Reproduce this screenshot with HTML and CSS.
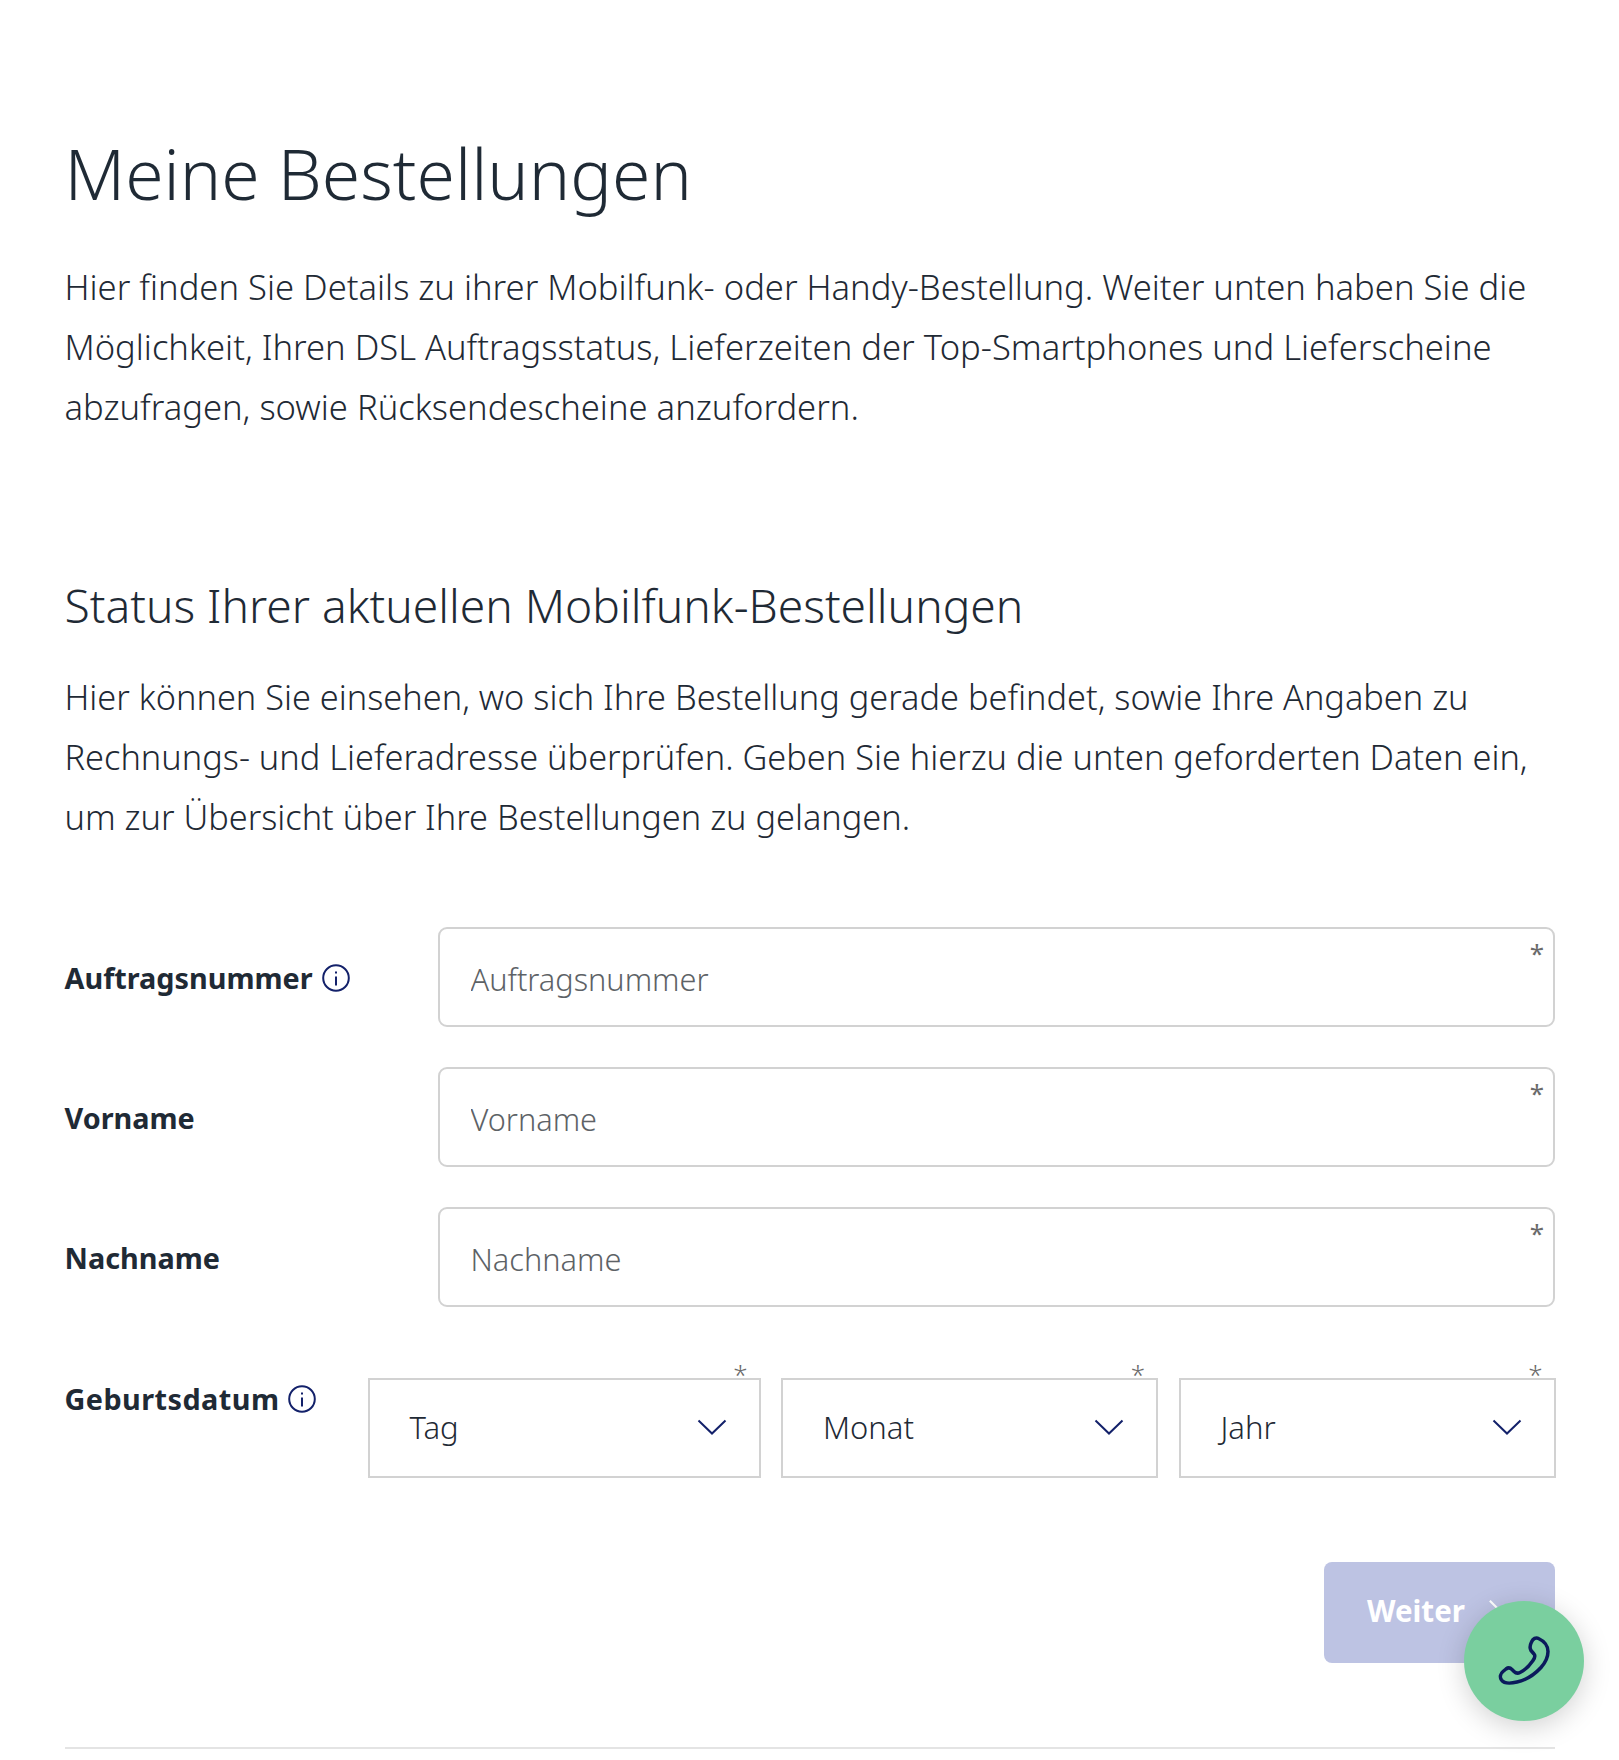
FILE: index.html
```html
<!DOCTYPE html>
<html lang="de">
<head>
  <meta charset="UTF-8" />
  <meta name="viewport" content="width=device-width, initial-scale=1.0"/>
  <title>Meine Bestellungen</title>
  <link rel="stylesheet" href="styles.css">
</head>
<body>
  <main class="container">
    <h1>Meine Bestellungen</h1>
    <p class="intro">Hier finden Sie Details zu ihrer Mobilfunk- oder Handy-Bestellung. Weiter unten haben Sie die<br>Möglichkeit, Ihren DSL Auftragsstatus, Lieferzeiten der Top-Smartphones und Lieferscheine<br>abzufragen, sowie Rücksendescheine anzufordern.</p>

    <h2>Status Ihrer aktuellen Mobilfunk-Bestellungen</h2>
    <p class="intro intro-status">Hier können Sie einsehen, wo sich Ihre Bestellung gerade befindet, sowie Ihre Angaben zu<br>Rechnungs- und Lieferadresse überprüfen. Geben Sie hierzu die unten geforderten Daten ein,<br>um zur Übersicht über Ihre Bestellungen zu gelangen.</p>

    <form class="order-form">
      <div class="form-row">
        <label for="orderNumber">Auftragsnummer
          <svg class="info-icon" viewBox="0 0 28 28"><circle cx="14" cy="14" r="12.8"/><path d="M14 12.5v9M14 7.5v2"/></svg>
        </label>
        <div class="field">
          <input type="text" id="orderNumber" placeholder="Auftragsnummer"/>
          <span class="required">*</span>
        </div>
      </div>
      <div class="form-row">
        <label for="firstName">Vorname</label>
        <div class="field">
          <input type="text" id="firstName" placeholder="Vorname"/>
          <span class="required">*</span>
        </div>
      </div>
      <div class="form-row">
        <label for="lastName">Nachname</label>
        <div class="field">
          <input type="text" id="lastName" placeholder="Nachname"/>
          <span class="required">*</span>
        </div>
      </div>
      <div class="date-row">
        <label>Geburtsdatum
          <svg class="info-icon" viewBox="0 0 28 28"><circle cx="14" cy="14" r="12.8"/><path d="M14 12.5v9M14 7.5v2"/></svg>
        </label>
        <div class="date-selects">
          <div class="select-box">Tag
            <svg class="chevron" viewBox="0 0 30 16"><path d="M1.5 1.5L15 14.5L28.5 1.5"/></svg>
            <span class="required outside">*</span>
          </div>
          <div class="select-box">Monat
            <svg class="chevron" viewBox="0 0 30 16"><path d="M1.5 1.5L15 14.5L28.5 1.5"/></svg>
            <span class="required outside">*</span>
          </div>
          <div class="select-box">Jahr
            <svg class="chevron" viewBox="0 0 30 16"><path d="M1.5 1.5L15 14.5L28.5 1.5"/></svg>
            <span class="required outside">*</span>
          </div>
        </div>
      </div>
      <div class="form-actions">
        <button type="button" class="next-btn">Weiter
          <svg class="next-arrow" viewBox="0 0 16 28"><path d="M2 2L14 14L2 26"/></svg>
        </button>
      </div>
    </form>
    <hr class="divider">
  </main>

  <button class="call-btn" aria-label="Anrufen">
    <svg viewBox="0 0 52 52"><path d="M33.500 7C35 3.500 38 2 40.500 3.500C46 6 50 11 50 16.500C50 22 47 28 43 32.500C37 39 28 45 19 47C13 48.500 6 48.500 3.500 45C1.500 42 2.500 38.500 5 36.500L8 34C10 32.500 12.500 33 14 34.500L16 36.500C18 38.500 20 38.500 22 37.500C27 35 32 30 35 25.500C37 22.500 37.500 20.500 36 19L33 15.500C31.500 13 32 10 33.500 7z"/></svg>
  </button>
</body>
</html>
```
FILE: styles.css
```css
body {
  font-family: 'Noto Sans', sans-serif;
  margin: 0;
  padding: 0;
  background: #fff;
  color: #1f2a35;
  height: 1760px;
  overflow: hidden;
  position: relative;
}

.container {
  padding: 0 64px 0 64.5px;
}

h1 {
  font-size: 69.6px;
  font-weight: 300;
  line-height: 86px;
  margin: 0;
  padding-top: 130px;
}

h2 {
  font-size: 46.2px;
  font-weight: 300;
  line-height: 60px;
  margin: 0;
  padding-top: 139px;
}

.intro {
  font-size: 34.6px;
  font-weight: 300;
  line-height: 60px;
  margin: 41px 0 0;
}

.intro.intro-status {
  font-size: 34.35px;
  margin-top: 31px;
}

.order-form {
  margin-top: 80px;
}

.form-row {
  display: flex;
  align-items: center;
  margin-bottom: 40px;
}

.form-row label {
  width: 373px;
  flex-shrink: 0;
}

label {
  display: flex;
  align-items: center;
  gap: 9px;
  font-size: 28.8px;
  font-weight: 700;
  height: 100px;
}

.info-icon {
  width: 28px;
  height: 28px;
  margin-top: 2px;
  fill: none;
  stroke: #13216a;
  stroke-width: 2;
}

.field {
  flex: 1;
  position: relative;
}

.field input {
  display: block;
  width: 100%;
  box-sizing: border-box;
  height: 100px;
  border: 2px solid #d2d2d2;
  border-radius: 9px;
  padding: 4px 31px 0;
  font-family: 'Noto Sans', sans-serif;
  font-size: 30.7px;
  font-weight: 300;
  outline: none;
  background: #fff;
}

.field input::placeholder {
  color: #5d6266;
  opacity: 1;
}

.required {
  position: absolute;
  top: 11px;
  right: 11px;
  font-size: 26px;
  line-height: 30px;
  color: #6a6a6a;
}

.required.outside {
  top: -21px;
  right: 11px;
}

.date-row {
  display: flex;
  margin-top: 71px;
}

.date-row label {
  width: 303px;
  flex-shrink: 0;
  height: 40px;
  letter-spacing: 0.45px;
}

.date-selects {
  flex: 1;
  display: grid;
  grid-template-columns: 393px 377px 377px;
  column-gap: 20.5px;
}

.select-box {
  position: relative;
  box-sizing: border-box;
  height: 100px;
  border: 2px solid #d2d2d2;
  padding: 0 32px 2px 40px;
  display: flex;
  align-items: center;
  justify-content: space-between;
  font-size: 31px;
  font-weight: 300;
}

.chevron {
  width: 30px;
  height: 16px;
  fill: none;
  stroke: #13216a;
  stroke-width: 2;
}

.form-actions {
  display: flex;
  justify-content: flex-end;
  margin-top: 84px;
}

.next-btn {
  width: 231px;
  height: 101px;
  background: #bdc3e3;
  border: none;
  border-radius: 8px;
  color: #fff;
  font-family: 'Noto Sans', sans-serif;
  font-size: 29.5px;
  font-weight: 700;
  display: flex;
  align-items: center;
  gap: 23px;
  padding: 0 0 4px 43px;
}

.next-arrow {
  width: 14px;
  height: 24px;
  fill: none;
  stroke: #fff;
  stroke-width: 2.5;
}

.divider {
  border: none;
  border-top: 2px solid #e4e4e4;
  margin: 84px 0 0;
}

/* floating call button */
.call-btn {
  position: absolute;
  left: 1464px;
  top: 1601px;
  width: 120px;
  height: 120px;
  border: none;
  border-radius: 50%;
  background: #7acf9f;
  box-shadow: 0 6px 28px rgba(0, 0, 0, 0.18);
  padding: 0;
  display: flex;
  align-items: center;
  justify-content: center;
}

.call-btn svg {
  width: 52px;
  height: 52px;
  fill: none;
  stroke: #0b1a5c;
  stroke-width: 3.5;
  stroke-linejoin: round;
}
```
